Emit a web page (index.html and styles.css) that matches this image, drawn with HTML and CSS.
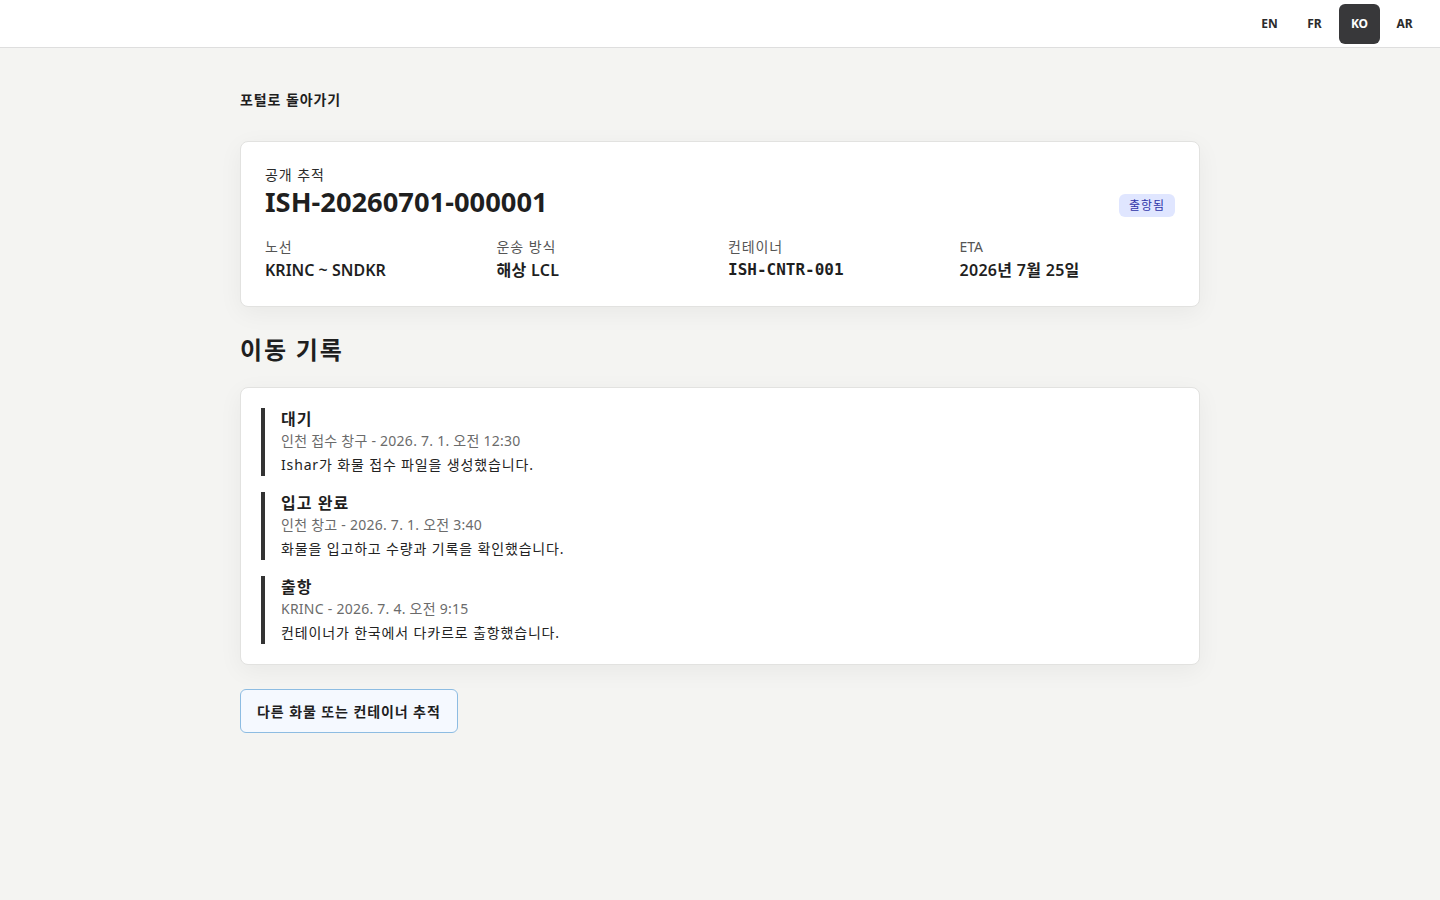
FILE: index.html
```html
<!DOCTYPE html>
<html lang="ko">
<head>
  <meta charset="UTF-8" />
  <meta name="viewport" content="width=device-width, initial-scale=1.0"/>
  <title>공개 추적</title>
  <link rel="stylesheet" href="styles.css">
</head>
<body>

  <header class="topbar">
    <nav class="lang-switch">
      <a href="#" class="lang">EN</a>
      <a href="#" class="lang">FR</a>
      <a href="#" class="lang active">KO</a>
      <a href="#" class="lang">AR</a>
    </nav>
  </header>

  <main class="page">
    <a href="#" class="back-link">포털로 돌아가기</a>

    <section class="card summary">
      <div class="summary-head">
        <div>
          <div class="eyebrow">공개 추적</div>
          <h1 class="ref">ISH-20260701-000001</h1>
        </div>
        <span class="badge">출항됨</span>
      </div>
      <div class="facts">
        <div class="fact">
          <div class="fact-label">노선</div>
          <div class="fact-value">KRINC ~ SNDKR</div>
        </div>
        <div class="fact">
          <div class="fact-label">운송 방식</div>
          <div class="fact-value ko">해상 LCL</div>
        </div>
        <div class="fact">
          <div class="fact-label">컨테이너</div>
          <div class="fact-value mono">ISH-CNTR-001</div>
        </div>
        <div class="fact">
          <div class="fact-label latin">ETA</div>
          <div class="fact-value ko">2026년 7월 25일</div>
        </div>
      </div>
    </section>

    <h2 class="section-title">이동 기록</h2>

    <section class="card timeline">
      <div class="event">
        <div class="event-title">대기</div>
        <div class="event-meta">인천 접수 창구 - 2026. 7. 1. 오전 12:30</div>
        <div class="event-text">Ishar가 화물 접수 파일을 생성했습니다.</div>
      </div>
      <div class="event">
        <div class="event-title">입고 완료</div>
        <div class="event-meta">인천 창고 - 2026. 7. 1. 오전 3:40</div>
        <div class="event-text">화물을 입고하고 수량과 기록을 확인했습니다.</div>
      </div>
      <div class="event">
        <div class="event-title">출항</div>
        <div class="event-meta">KRINC - 2026. 7. 4. 오전 9:15</div>
        <div class="event-text">컨테이너가 한국에서 다카르로 출항했습니다.</div>
      </div>
    </section>

    <button type="button" class="btn-track">다른 화물 또는 컨테이너 추적</button>
  </main>

</body>
</html>
```

FILE: styles.css
```css
body {
  margin: 0;
  font-family: 'Noto Sans', 'Noto Sans CJK KR', sans-serif;
  background: #f4f4f2;
  color: #1f1f1f;
  min-height: 100vh;
}

a {
  color: inherit;
  text-decoration: none;
}

/* hangul runs a bit wider */
.back-link,
.eyebrow,
.fact-label,
.event-title,
.btn-track {
  letter-spacing: 0.065em;
}

.fact-label.latin {
  letter-spacing: 0;
}

.topbar {
  height: 48px;
  background: white;
  border-bottom: 1px solid #dedede;
  display: flex;
  justify-content: flex-end;
  align-items: center;
  padding: 0 15px;
  box-sizing: border-box;
}

.lang-switch {
  display: flex;
  gap: 4px;
}

.lang {
  width: 41px;
  height: 40px;
  display: flex;
  align-items: center;
  justify-content: center;
  font-size: 12px;
  font-weight: 700;
  color: #2b2b2b;
  border-radius: 6px;
}

.lang.active {
  background: #38383a;
  color: white;
}

.page {
  width: 960px;
  margin: 0 auto;
  padding-top: 42px;
}

.back-link {
  display: block;
  font-size: 14px;
  font-weight: 600;
  line-height: 20px;
}

.card {
  background: white;
  border: 1px solid #e2e2e0;
  border-radius: 8px;
  box-shadow: 0 6px 24px rgba(0, 0, 0, 0.05);
}

.summary {
  margin-top: 31px;
  padding: 23px 24px 24px;
}

.summary-head {
  display: flex;
  justify-content: space-between;
  align-items: flex-end;
}

.eyebrow {
  font-size: 14px;
  line-height: 20px;
  color: #2b2b2b;
}

.ref {
  margin: 0;
  font-size: 27.3px;
  line-height: 34px;
  font-weight: 700;
  color: #1f1f1f;
}

.badge {
  background: #e0e6ff;
  color: #2f34a8;
  font-size: 12px;
  line-height: 15px;
  letter-spacing: 0.08em;
  padding: 4px 10px;
  border-radius: 6px;
  margin-bottom: 2px;
}

.facts {
  display: grid;
  grid-template-columns: repeat(4, 1fr);
  gap: 16px;
  margin-top: 18px;
}

.fact-label {
  font-size: 14px;
  line-height: 20px;
  color: #555;
}

.fact-value {
  font-size: 16px;
  line-height: 24px;
  font-weight: 600;
  margin-top: 1px;
}

.fact-value.ko {
  letter-spacing: 0.3px;
}

.fact-value.mono {
  font-family: 'DejaVu Sans Mono', monospace;
  font-size: 16px;
  font-weight: 700;
  letter-spacing: 0;
}

.section-title {
  margin: 26px 0 20px;
  font-size: 24px;
  line-height: 34px;
  font-weight: 700;
  letter-spacing: 0.075em;
}

.timeline {
  padding: 20px 20px;
  display: flex;
  flex-direction: column;
  gap: 16px;
}

.event {
  border-left: 4px solid #333;
  padding: 0 0 0 16px;
  height: 68px;
  box-sizing: border-box;
}

.event-title {
  font-size: 16px;
  font-weight: 700;
  line-height: 22px;
}

.event-meta {
  font-size: 14px;
  line-height: 22px;
  color: #6b6b6b;
  letter-spacing: 0.25px;
}

.event-text {
  font-size: 14px;
  line-height: 25px;
  color: #222;
  letter-spacing: 0.85px;
}

.btn-track {
  margin-top: 24px;
  padding: 0 16px;
  height: 44px;
  background: #f5f9ff;
  color: #1f1f1f;
  border: 1px solid #8dbce2;
  border-radius: 6px;
  font-family: inherit;
  font-size: 14px;
  font-weight: 600;
  cursor: pointer;
}

.btn-track:hover {
  background: #e8f2ff;
}
```
